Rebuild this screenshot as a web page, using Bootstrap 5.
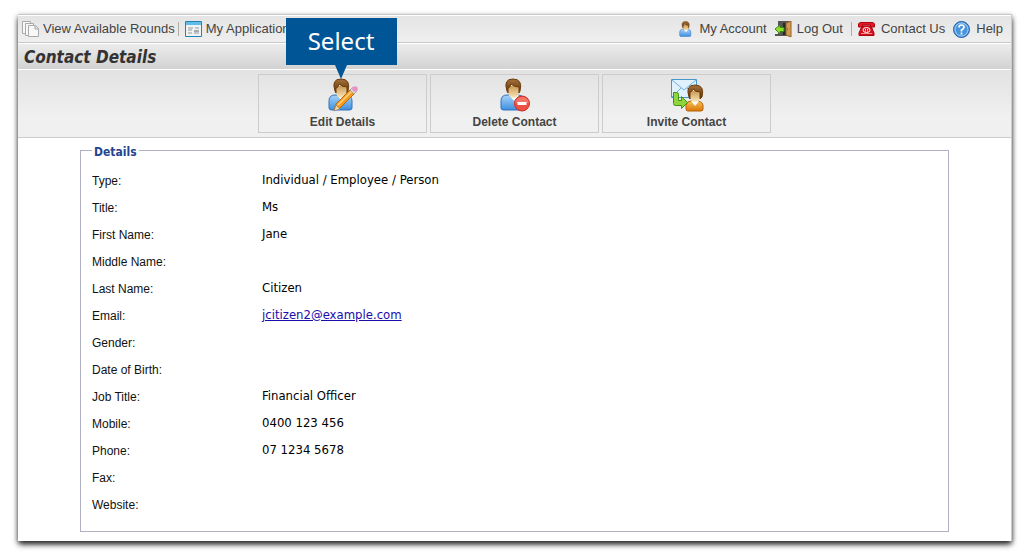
<!DOCTYPE html>
<html lang="en">
<head>
<meta charset="utf-8">
<meta name="viewport" content="width=device-width, initial-scale=1">
<title>Contact Details</title>
<link rel="stylesheet" href="https://cdn.jsdelivr.net/npm/bootstrap@5.3.0/dist/css/bootstrap.min.css">
<style>
body { background: #fff; color: #111; font-family: "Liberation Sans", Arial, sans-serif; font-size: 12px; line-height: 16px; }
.app-window { margin: 14px 23px 18px 18px; background: #fff; border-top: 1px solid #c8c8c8; border-right: 1px solid #ccc; box-shadow: 0 4px 6px -1px rgba(0,0,0,.8), 0 2px 5px rgba(0,0,0,.45); }
.app-bar { height: 28px; padding: 0 8px 0 4px; border-top: 1px solid #fff; border-bottom: 1px solid #c8c8c8; background: linear-gradient(#e4e4e4, #efefef); }
.app-bar a { gap: 6px; color: #444; font-size: 13px; text-decoration: none; white-space: nowrap; }
.app-bar a.tight { gap: 4px; }
.app-bar svg { flex: none; }
.bar-rule { width: 1px; height: 14px; margin: 0 6px 0 3px; background: #b0aca0; }
.page-heading { height: 27px; margin: 0; padding: 0 6px; border-top: 1px solid #fff; border-bottom: 1px solid #fff; background: linear-gradient(#ececec, #d2d2d2); color: #333; font: italic bold 17px/27px "DejaVu Sans Condensed", "DejaVu Sans", sans-serif; }
.action-bar { padding: 4px 0; gap: 3px; background: linear-gradient(#e2e2e2, #f0f0f0 70%); border-bottom: 1px solid #ccc; }
.action-slot { width: 169px; }
.action-btn { height: 59px; padding: 0; border: 1px solid #ccc; background: transparent; color: #444; font-weight: bold; font-size: 12px; line-height: 16px; }
.action-btn svg { display: block; margin: 0 auto 2px; }
.callout-tip { left: 50%; top: -56px; margin-left: -57px; width: 111px; height: 47px; background: #005596; color: #fff; font: 24px/46px "Noto Sans", sans-serif; z-index: 2; pointer-events: none; }
.callout-tip::after { content: ""; position: absolute; left: 50%; top: 100%; margin-left: -6px; border: solid transparent; border-width: 14px 6px 0; border-top-color: #005596; }
.details-area { padding: 5px 62px 9px; }
.details-box { border: 1px solid #b0b0c4; padding: 9px 11px 13px; }
.details-box legend { float: none; width: auto; margin: 0; padding: 3px 2px 0; color: #234590; font: bold 12px/12px "DejaVu Sans Condensed", "DejaVu Sans", sans-serif; }
.detail-line { height: 27px; }
.detail-line dt { width: 170px; font-weight: normal; line-height: 29px; }
.detail-line dd { margin: 0; font: 13px/26px "DejaVu Sans Condensed", "DejaVu Sans", sans-serif; color: #000; }
.detail-line a { color: #1a0dab; }
</style>
</head>
<body>
<svg width="0" height="0" class="position-absolute" aria-hidden="true">
  <defs>
    <linearGradient id="blue" x1="0" y1="0" x2="0" y2="1"><stop stop-color="#a9d3f8"/><stop offset="1" stop-color="#3d8fe0"/></linearGradient>
    <linearGradient id="hair" x1="0" y1="0" x2="0" y2="1"><stop stop-color="#a5703a"/><stop offset="1" stop-color="#5c3208"/></linearGradient>
    <linearGradient id="skin" x1="0" y1="0" x2="0" y2="1"><stop stop-color="#c99a55"/><stop offset="1" stop-color="#fbe8bb"/></linearGradient>
    <linearGradient id="orange" x1="0" y1="0" x2="0" y2="1"><stop stop-color="#fbc25a"/><stop offset="1" stop-color="#d97706"/></linearGradient>
    <symbol id="person" viewBox="0 0 26 33">
      <path d="M1 30v-7q0-6 6-6h10q7 0 7 6v7q0 2-3 2H4q-3 0-3-2z" fill="url(#blue)" stroke="#3070bd"/>
      <path d="M9 17l5 6 5-6z" fill="#fff"/>
      <path d="M8 8h11v7q-1 4-5.500 5Q9 19 8 15z" fill="url(#skin)"/>
      <path d="M7 13Q3 1 13 1q10 0 7 12l-1 2V9q-5 0-8-3-1 4-3 4v5z" fill="url(#hair)" stroke="#6b3c0c"/>
    </symbol>
  </defs>
</svg>

<div class="app-window">
  <nav class="app-bar d-flex align-items-center justify-content-between" aria-label="Main">
    <div class="d-flex align-items-center">
      <a href="#" class="tight d-flex align-items-center">
        <svg width="17" height="17" viewBox="0 0 17 17" fill="#f8f8f8" stroke="#aaa"><path d="M.5.500h8v12h-8z"/><path d="M3.500 2.500h8v12h-8z"/><path d="M6.500 4.500h7l3 3v8h-10z"/><path d="M13 5v3h3" fill="#ddd"/></svg>
        View Available Rounds</a>
      <span class="bar-rule"></span>
      <a href="#" class="tight d-flex align-items-center">
        <svg width="17" height="16" viewBox="0 0 17 16"><path d="M.500.500h16v15H.500z" fill="#eef3f5" stroke="#2482b5"/><path d="M1 1h15v3H1z" fill="#61bde8"/><path d="M3 7h5M10 7h4M3 9h4M3 12h4M9 12h5" stroke="#999"/><path d="M9 9h5v2H9z" fill="#aaa"/></svg>
        My Applications</a>
    </div>
    <div class="d-flex align-items-center">
      <a href="#" class="d-flex align-items-center"><svg width="15" height="16"><use href="#person"/></svg>My Account</a>
      <a href="#" class="tight d-flex align-items-center ms-2">
        <svg width="18" height="16" viewBox="0 0 18 16"><path d="M3 0h12v15H0v-2h3z" fill="#555"/><path d="M8 2h5v12H8z" fill="#292929"/><path d="M11 2l5-2v16l-5-2z" fill="#d09a51" stroke="#95602a"/><path d="M12 8h1" stroke="#543"/><path d="M0 8l5-4v2.500h4v4H5V13z" fill="#8ee02e" stroke="#358a10"/></svg>
        Log Out</a>
      <span class="bar-rule ms-2"></span>
      <a href="#" class="d-flex align-items-center">
        <svg width="17" height="14" viewBox="0 0 17 14"><path d="M4 4h9l3 7v2.500H1V11z" fill="#d8101b" stroke="#aa0710"/><path d="M.500 5V2Q1 .500 3 .500h11q2 0 2.500 1.500v3h-4V3h-8v2z" fill="#e51b24" stroke="#aa0710"/><ellipse cx="8.500" cy="8" rx="3.500" ry="2.500" fill="none" stroke="#fff"/><path d="M7 7.500h3M7 9h3" stroke="#fff" stroke-dasharray="1 1"/><path d="M3 11.500h11" stroke="#f58a8a"/></svg>
        Contact Us</a>
      <a href="#" class="d-flex align-items-center ms-2">
        <svg width="17" height="17" viewBox="0 0 17 17"><circle cx="8.500" cy="8.500" r="8" fill="#4a94dc" stroke="#225fa9"/><circle cx="8.500" cy="8.500" r="6.500" fill="none" stroke="#a6d0f5"/><path d="M6 6.500Q6 4 8.500 4 11 4 11 6.200 11 7.500 8.500 9v1.500M8.500 11.500v2" fill="none" stroke="#fff" stroke-width="1.700"/></svg>
        Help</a>
    </div>
  </nav>

  <h1 class="page-heading">Contact Details</h1>

  <div class="action-bar d-flex justify-content-center">
    <div class="action-slot position-relative">
      <button type="button" class="action-btn w-100">
        <svg width="32" height="34" viewBox="0 0 32 34"><use href="#person" x="1" y="0" width="26" height="33"/><path d="M7 32l2-6L24 11l4 4-15 15z" fill="#f69b21" stroke="#b66a13"/><path d="M11 27l14-14" stroke="#ffd486" stroke-width="1.500"/><path d="M7 33l2-6 4 4z" fill="#f1d6a5" stroke="#777" stroke-width=".6"/><path d="M23 12l3-3 4 4-3 3z" fill="#ddd" stroke="#888" stroke-width=".6"/><circle cx="28" cy="11" r="2.800" fill="#e992c4"/></svg>
        Edit Details</button>
      <div class="callout-tip position-absolute text-center" role="tooltip">Select</div>
    </div>
    <div class="action-slot">
      <button type="button" class="action-btn w-100">
        <svg width="32" height="34" viewBox="0 0 32 34"><use href="#person" x="1" y="0" width="26" height="33"/><circle cx="23" cy="25.500" r="7.500" fill="#ee5043" stroke="#c92e26"/><path d="M16 25q1-6 7-6t7 6z" fill="#f68a7c" opacity=".6"/><path d="M18.500 24h9v3h-9z" fill="#fff"/></svg>
        Delete Contact</button>
    </div>
    <div class="action-slot">
      <button type="button" class="action-btn w-100">
        <svg width="34" height="34" viewBox="0 0 34 34"><path d="M1.500 1.500h25v18h-25z" fill="#e0f1fd" stroke="#4996cc"/><path d="M2 2l12 10L26 2M2 19l9-9M26 19l-9-9" fill="none" stroke="#6bb0de"/><path d="M16 31v-4q1-4 5-4h7q5 1 5 5v3q0 2-2 2H18q-2 0-2-2z" fill="url(#orange)" stroke="#b86007"/><path d="M21 23l4 5 4-5z" fill="#fff"/><path d="M20 13h10v7q-1 4-5 4-4 0-5-4z" fill="url(#skin)"/><path d="M19 19q-4-12 6-12t7 12l-2 2v-7q-5 0-7-3-1 3-3 3v7z" fill="url(#hair)" stroke="#6b3c0c"/><path d="M3.500 14.500h3q2 0 2 2v6h3v-4l6 6-6 6v-3h-6q-2 0-2-2z" fill="#8ed63b" stroke="#438e14"/></svg>
        Invite Contact</button>
    </div>
  </div>

  <main class="details-area">
    <fieldset class="details-box">
      <legend>Details</legend>
      <dl class="mb-0">
        <div class="detail-line d-flex"><dt>Type:</dt><dd>Individual / Employee / Person</dd></div>
        <div class="detail-line d-flex"><dt>Title:</dt><dd>Ms</dd></div>
        <div class="detail-line d-flex"><dt>First Name:</dt><dd>Jane</dd></div>
        <div class="detail-line d-flex"><dt>Middle Name:</dt><dd></dd></div>
        <div class="detail-line d-flex"><dt>Last Name:</dt><dd>Citizen</dd></div>
        <div class="detail-line d-flex"><dt>Email:</dt><dd><a href="mailto:jcitizen2@example.com">jcitizen2@example.com</a></dd></div>
        <div class="detail-line d-flex"><dt>Gender:</dt><dd></dd></div>
        <div class="detail-line d-flex"><dt>Date of Birth:</dt><dd></dd></div>
        <div class="detail-line d-flex"><dt>Job Title:</dt><dd>Financial Officer</dd></div>
        <div class="detail-line d-flex"><dt>Mobile:</dt><dd>0400 123 456</dd></div>
        <div class="detail-line d-flex"><dt>Phone:</dt><dd>07 1234 5678</dd></div>
        <div class="detail-line d-flex"><dt>Fax:</dt><dd></dd></div>
        <div class="detail-line d-flex"><dt>Website:</dt><dd></dd></div>
      </dl>
    </fieldset>
  </main>
</div>
<script src="https://cdn.jsdelivr.net/npm/bootstrap@5.3.0/dist/js/bootstrap.bundle.min.js"></script>
</body>
</html>
